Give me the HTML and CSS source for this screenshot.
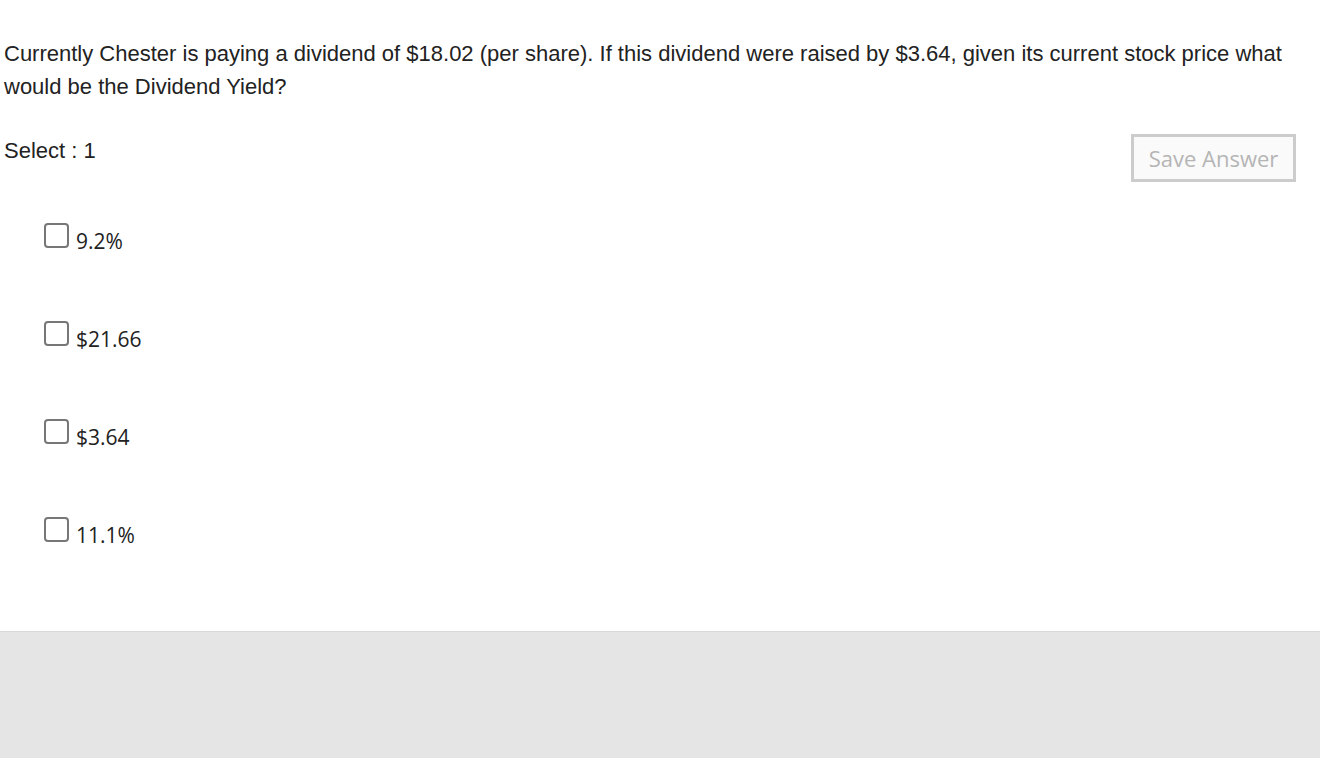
FILE: index.html
```html
<!DOCTYPE html>
<html>
<head>
<meta charset="utf-8">
<link rel="stylesheet" href="styles.css">
</head>
<body>
<main class="question">
  <p class="prompt">Currently Chester is paying a dividend of $18.02 (per share). If this dividend were raised by $3.64, given its current stock price what would be the Dividend Yield?</p>
  <div class="select-row">
    <span class="select-label">Select : 1</span>
    <button class="save-btn" disabled>Save Answer</button>
  </div>
  <ul class="options">
    <li class="option"><span class="box"></span><span class="opt-text">9.2%</span></li>
    <li class="option"><span class="box"></span><span class="opt-text">$21.66</span></li>
    <li class="option"><span class="box"></span><span class="opt-text">$3.64</span></li>
    <li class="option"><span class="box"></span><span class="opt-text">11.1%</span></li>
  </ul>
</main>
<footer class="footer"></footer>
</body>
</html>
```
FILE: styles.css
```css
html, body {
  margin: 0;
  padding: 0;
  background: #fff;
}
body {
  display: flex;
  flex-direction: column;
  height: 758px;
  overflow: hidden;
}
.question {
  padding: 37px 24px 0 4px;
  height: 631px;
  box-sizing: border-box;
  flex: none;
}
.prompt {
  margin: 0;
  font-family: "Liberation Sans", Arial, sans-serif;
  font-size: 22px;
  line-height: 33px;
  color: #222;
}
.select-row {
  display: flex;
  justify-content: space-between;
  align-items: flex-start;
  margin-top: 31px;
}
.select-label {
  font-family: "Liberation Sans", Arial, sans-serif;
  font-size: 22px;
  line-height: 33px;
  color: #222;
}
.save-btn {
  width: 165px;
  height: 48px;
  border: 3px solid #cccccc;
  background: #fafafa;
  color: #b5b5b5;
  font-family: "Open Sans", "Noto Sans", sans-serif;
  font-size: 22px;
  line-height: 28px;
  padding: 0;
  margin: 0;
}
.options {
  list-style: none;
  margin: 41px 0 0 40px;
  padding: 0;
}
.option {
  display: flex;
  align-items: flex-start;
  height: 98px;
}
.box {
  width: 21px;
  height: 21px;
  border: 2px solid #777;
  border-radius: 4px;
  flex: none;
}
.opt-text {
  margin-left: 7px;
  margin-top: 4px;
  font-family: "Open Sans", "Noto Sans", sans-serif;
  font-size: 21px;
  line-height: 28px;
  color: #222;
}
.footer {
  flex: 1;
  background: #e5e5e5;
  border-top: 1px solid #d9d9d9;
}
```
